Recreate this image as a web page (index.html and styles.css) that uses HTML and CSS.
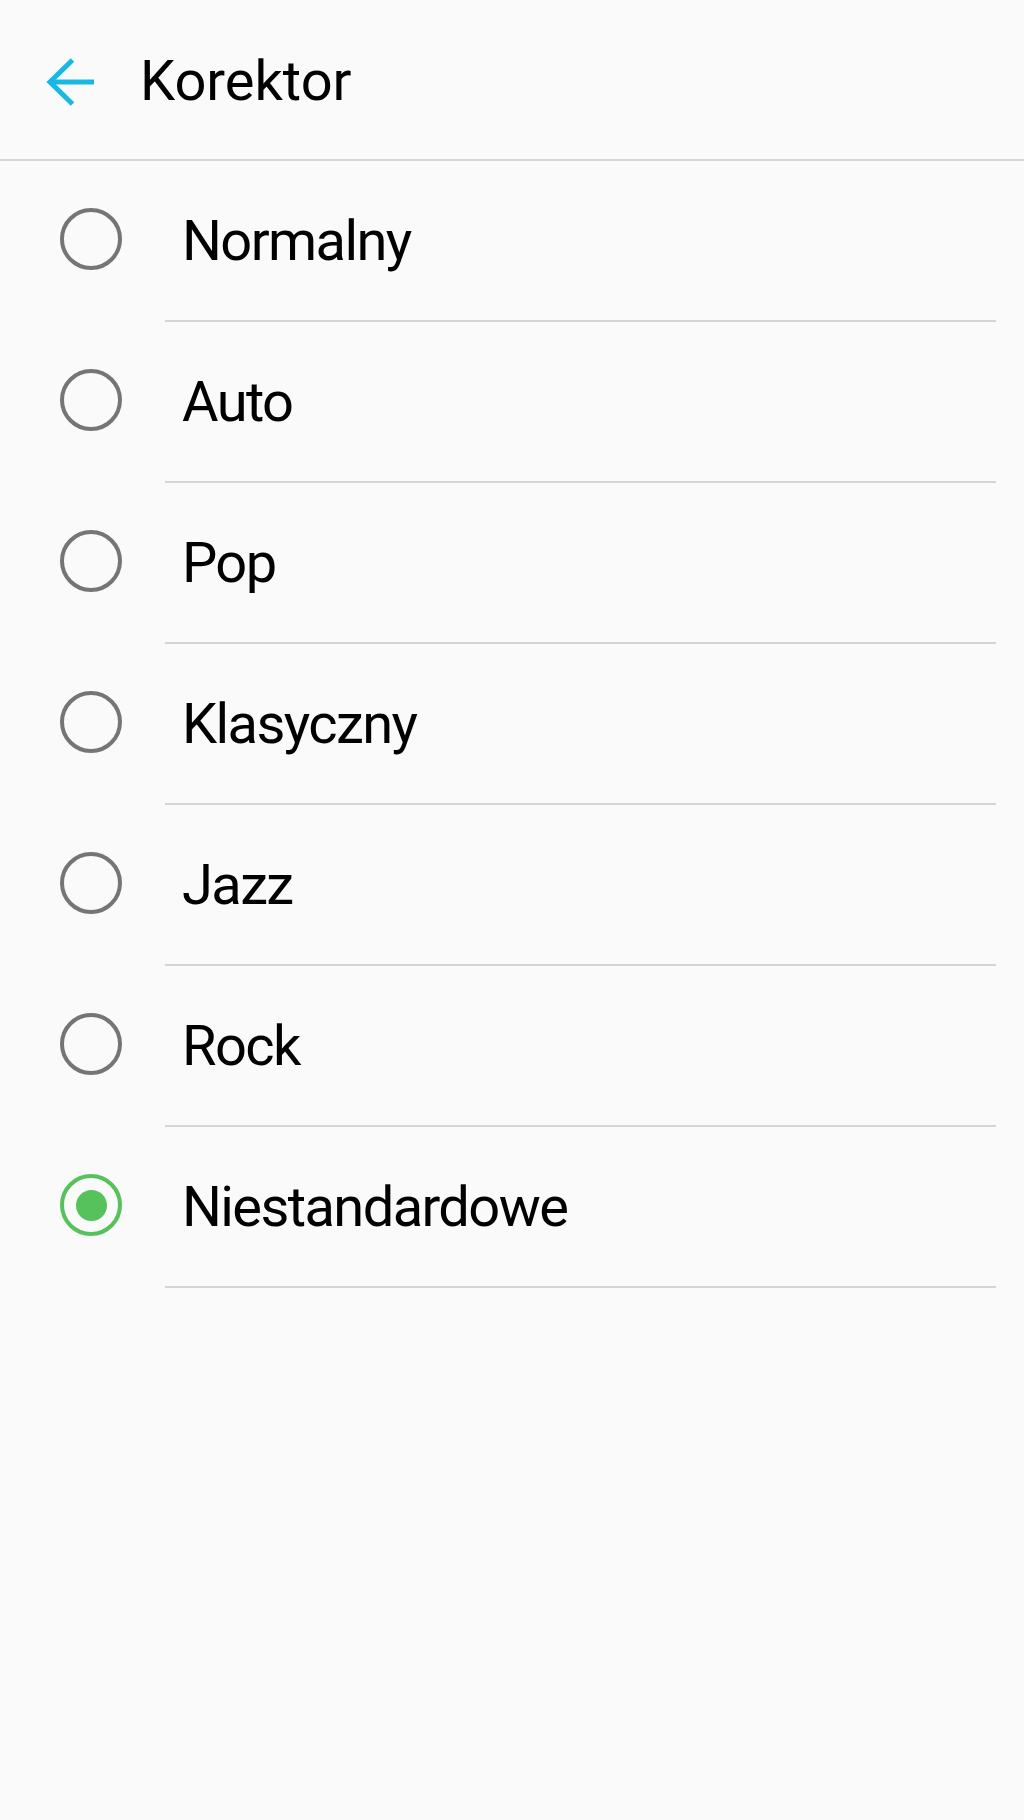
FILE: index.html
```html
<!DOCTYPE html>
<html lang="pl">
<head>
<meta charset="utf-8">
<title>Korektor</title>
<link rel="stylesheet" href="styles.css">
</head>
<body>
<div class="screen">
  <header class="appbar">
    <svg class="back" width="52" height="52" viewBox="0 0 52 52">
      <line x1="4" y1="26" x2="49" y2="26" stroke="#18b8e5" stroke-width="5"/>
      <polyline points="27.5,4 5,26 27.5,48" fill="none" stroke="#18b8e5" stroke-width="5"/>
    </svg>
    <h1 class="title">Korektor</h1>
  </header>
  <ul class="list">
    <li class="item"><span class="radio"></span><span class="label">Normalny</span></li>
    <li class="sep"></li>
    <li class="item"><span class="radio"></span><span class="label">Auto</span></li>
    <li class="sep"></li>
    <li class="item"><span class="radio"></span><span class="label">Pop</span></li>
    <li class="sep"></li>
    <li class="item"><span class="radio"></span><span class="label">Klasyczny</span></li>
    <li class="sep"></li>
    <li class="item"><span class="radio"></span><span class="label">Jazz</span></li>
    <li class="sep"></li>
    <li class="item"><span class="radio"></span><span class="label">Rock</span></li>
    <li class="sep"></li>
    <li class="item"><span class="radio checked"><span class="dot"></span></span><span class="label">Niestandardowe</span></li>
    <li class="sep"></li>
  </ul>
</div>
</body>
</html>
```
FILE: styles.css
```css
html, body {
  margin: 0;
  padding: 0;
  background: #fafafa;
}
body {
  font-family: Roboto, "Noto Sans", sans-serif;
  color: #000;
}
.screen {
  width: 1024px;
  min-height: 1820px;
  background: #fafafa;
}
.appbar {
  height: 159px;
  border-bottom: 2px solid #d6d6d6;
  display: flex;
  align-items: center;
}
.back {
  margin-left: 45px;
  margin-top: 5px;
  flex: none;
}
.title {
  margin: 0 0 0 43px;
  font-size: 56px;
  font-weight: 400;
  line-height: 56px;
  padding-top: 2px;
}
.list {
  list-style: none;
  margin: 0;
  padding: 0;
}
.item {
  height: 159px;
  display: flex;
  align-items: center;
  padding-left: 60px;
}
.radio {
  width: 62px;
  height: 62px;
  box-sizing: border-box;
  border: 4.5px solid #757575;
  border-radius: 50%;
  flex: none;
  margin-bottom: 3px;
  display: flex;
  align-items: center;
  justify-content: center;
}
.radio.checked {
  border-color: #55c25b;
}
.dot {
  width: 31px;
  height: 31px;
  border-radius: 50%;
  background: #55c25b;
}
.label {
  margin-left: 60px;
  font-size: 56px;
  line-height: 56px;
  letter-spacing: -1.6px;
}
.sep {
  height: 2px;
  background: #d4d4d4;
  margin: 0 28px 0 165px;
}
```
